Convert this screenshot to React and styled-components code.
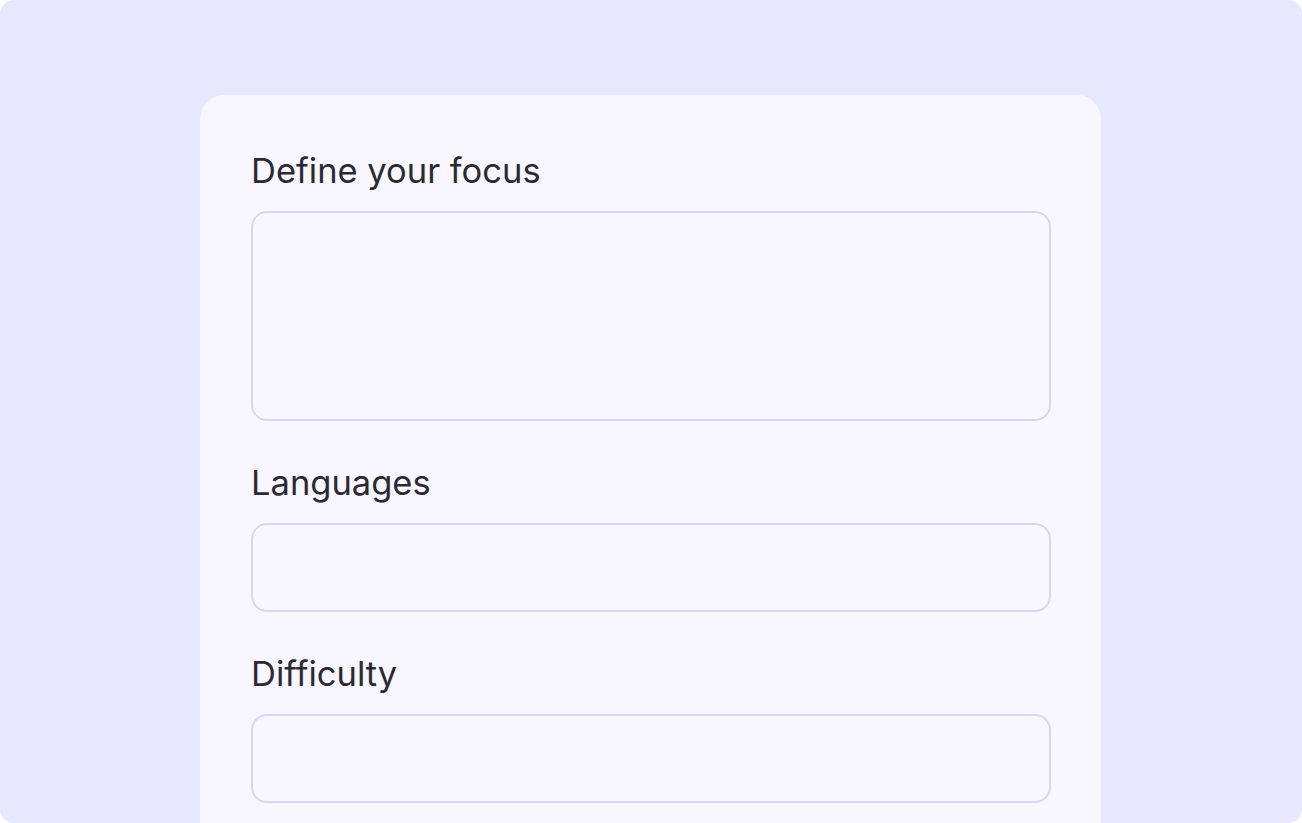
import React from "react";
import styled, { createGlobalStyle } from "styled-components";

const Global = createGlobalStyle`
  html, body { margin: 0; padding: 0; background: #ffffff; }
  * { box-sizing: border-box; }
`;

const Frame = styled.div`
  width: 1302px;
  height: 823px;
  background: #e7e8fe;
  border-radius: 14px;
  overflow: hidden;
  display: flex;
  justify-content: flex-start;
  padding: 95px 0 0 200px;
`;

const Card = styled.div`
  width: 901px;
  height: 760px;
  background: #f8f7ff;
  border-radius: 24px 24px 0 0;
  padding: 56px 51px 0 51px;
  display: flex;
  flex-direction: column;
`;

const Field = styled.div`
  display: flex;
  flex-direction: column;
  margin-top: ${(p) => (p.$first ? "0" : "42px")};
`;

const Label = styled.label`
  font-family: Inter, "Noto Sans", sans-serif;
  font-size: 34.5px;
  line-height: 40px;
  font-weight: 400;
  color: #2b2a33;
  letter-spacing: 0;
  margin-bottom: 20px;
`;

const Box = styled.div`
  width: 800px;
  height: ${(p) => p.$h}px;
  border: 2.5px solid #d4d6fc;
  border-radius: 16px;
  background: #f8f7ff;
`;

export default function App() {
  return (
    <>
      <Global />
      <Frame>
        <Card>
          <Field $first>
            <Label>Define your focus</Label>
            <Box $h={210} />
          </Field>
          <Field>
            <Label>Languages</Label>
            <Box $h={89} />
          </Field>
          <Field>
            <Label>Difficulty</Label>
            <Box $h={89} />
          </Field>
        </Card>
      </Frame>
    </>
  );
}
